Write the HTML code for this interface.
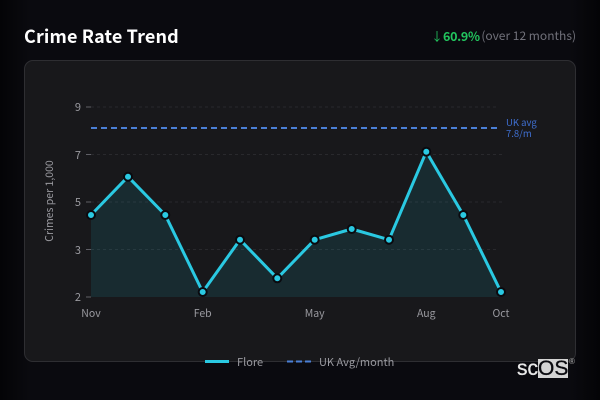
<!DOCTYPE html>
<html><head><meta charset="utf-8">
<style>
html,body{margin:0;padding:0;width:600px;height:400px;overflow:hidden;background:#0a0a0f}
body{font-family:"Noto Sans CJK SC","Liberation Sans",sans-serif;position:relative}
div{position:absolute;white-space:nowrap}
.shade{left:0;top:0;width:600px;height:400px;background:linear-gradient(90deg,#040406 0,#0a0a0f 30px,#0a0a0f 570px,#040406 100%)}
.card{left:24px;top:60px;width:550px;height:300px;background:#18181b;border:1px solid #2e2e32;border-radius:9px}
.title{left:24px;top:23px;font-size:18px;line-height:26px;font-weight:700;color:#fff;letter-spacing:.13px}
.s{top:26px;font-size:12.5px;line-height:20px}
.a{left:431px;top:27px;color:#22c55e;font-size:12px}
.b{left:443px;color:#22c55e;font-weight:700;font-size:12.5px;letter-spacing:-.3px}
.c{right:24px;color:#71717a;font-size:12px}
svg{position:absolute;left:0;top:0}
.logo{left:517px;top:359px;font-family:"Liberation Sans",sans-serif;font-size:21px;line-height:19px;font-weight:400;color:#e8e8e8;-webkit-text-stroke:.3px #e8e8e8}
.logo span{background:#d4d4d4;color:#0a0a0f;-webkit-text-stroke:.3px #0a0a0f;display:inline-block;height:19px;padding:0}
.reg{left:569px;top:358px;font-family:"Liberation Sans",sans-serif;font-size:8px;line-height:8px;color:#aaa}
</style></head><body>
<div class="shade"></div>
<div class="card"></div>
<div class="title">Crime Rate Trend</div>
<div class="s a">↓</div><div class="s b">60.9%</div><div class="s c">(over 12 months)</div>
<svg width="600" height="400" viewBox="0 0 600 400" font-family="'Noto Sans CJK SC','Liberation Sans',sans-serif">
<g stroke="#29292d" stroke-width="1" stroke-dasharray="3 3">
<path d="M91 107H497M91 154.5H503M91 202H503M91 249.5H497"/>
</g>
<path d="M91 297V215L128 176.7 165.3 215 202.7 292 240 239.7 277.3 278.3 314.7 239.7 351.7 229 389 239.7 426.3 151.7 463.3 215 501 292 501 297Z" fill="#22d3ee" fill-opacity=".1"/>
<g stroke="#5f5f66" stroke-width="1"><path d="M86 107H91M86 154.5H91M86 202H91M86 249.5H91M86 297H91"/></g>
<path d="M91 128H497" stroke="#4a7fd6" stroke-width="2" stroke-dasharray="6 4"/>
<path d="M91 215L128 176.7 165.3 215 202.7 292 240 239.7 277.3 278.3 314.7 239.7 351.7 229 389 239.7 426.3 151.7 463.3 215 501 292" fill="none" stroke="#2ac9e2" stroke-width="3" stroke-linejoin="round"/>
<g fill="#2ac9e2" stroke="#0a0a0f" stroke-width="2">
<circle cx="91" cy="215" r="4"/><circle cx="128" cy="176.7" r="4"/><circle cx="165.3" cy="215" r="4"/><circle cx="202.7" cy="292" r="4"/><circle cx="240" cy="239.7" r="4"/><circle cx="277.3" cy="278.3" r="4"/><circle cx="314.7" cy="239.7" r="4"/><circle cx="351.7" cy="229" r="4"/><circle cx="389" cy="239.7" r="4"/><circle cx="426.3" cy="151.7" r="4"/><circle cx="463.3" cy="215" r="4"/><circle cx="501" cy="292" r="4"/>
</g>
<g fill="#9a9aa0" font-size="11" text-anchor="end">
<text x="81" y="111">9</text><text x="81" y="159">7</text><text x="81" y="206">5</text><text x="81" y="254">3</text><text x="81" y="301">2</text>
</g>
<g fill="#9a9aa0" font-size="10.5" text-anchor="middle">
<text x="91" y="317">Nov</text><text x="202.7" y="317">Feb</text><text x="314.7" y="317">May</text><text x="426.3" y="317">Aug</text><text x="501" y="317">Oct</text>
</g>
<text transform="translate(53 201) rotate(-90)" fill="#9a9aa0" font-size="10.5" text-anchor="middle">Crimes per 1,000</text>
<g fill="#3f6fd1" font-size="9.5"><text x="506" y="126">UK avg</text><text x="506" y="137">7.8/m</text></g>
<path d="M205 361.500H229" stroke="#2ac9e2" stroke-width="3"/>
<path d="M287 361.500H311" stroke="#4a7fd6" stroke-width="2" stroke-dasharray="6 3"/>
<g fill="#9a9aa0" font-size="11"><text x="237" y="366">Flore</text><text x="319" y="366">UK Avg/month</text></g>
</svg>
<div class="logo">sc<span>OS</span></div>
<div class="reg">®</div>
</body></html>
